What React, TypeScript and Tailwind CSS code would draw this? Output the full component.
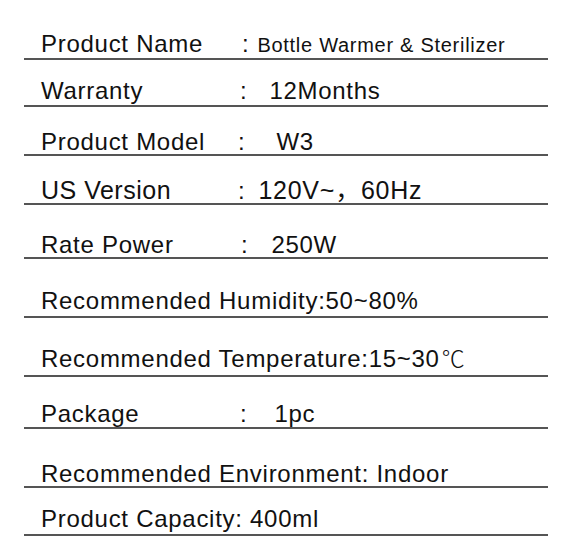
import React from 'react';

function Row({ h, pb, children }: { h: string; pb: string; children: React.ReactNode }) {
  return (
    <div className={`flex flex-col justify-end border-b-2 border-[#555] pl-[17px] ${h} ${pb}`}>
      <div className="flex items-baseline leading-none">{children}</div>
    </div>
  );
}

export default function App() {
  return (
    <div
      className="w-[574px] h-[556px] bg-white pt-[13px] pl-6 pr-[26px] text-[24px] tracking-[0.03em] text-[#111]"
      style={{ fontFamily: '"Liberation Sans", Arial, "Noto Sans CJK SC", sans-serif' }}
    >
      {/* Product Name */}
      <Row h="h-[47px]" pb="pb-[2px]">
        <span className="w-[196px] shrink-0">Product Name</span>
        <span className="ml-[5px]">:</span>
        <span className="ml-[8px] text-[20px]">Bottle Warmer &amp; Sterilizer</span>
      </Row>

      {/* Warranty */}
      <Row h="h-[47px]" pb="pb-[2px]">
        <span className="w-[196px] shrink-0">Warranty</span>
        <span className="ml-[3px]">:</span>
        <span className="ml-[22px]">12Months</span>
      </Row>

      {/* Product Model */}
      <Row h="h-[49px]" pb="pb-0">
        <span className="w-[196px] shrink-0">Product Model</span>
        <span className="ml-[1px]">:</span>
        <span className="ml-[31px]">W3</span>
      </Row>

      {/* US Version */}
      <Row h="h-[49px]" pb="pb-0">
        <span className="w-[196px] shrink-0 text-[25px] tracking-[0.02em]">US Version</span>
        <span className="ml-[1px]">:</span>
        <span className="ml-[13px] text-[25px] tracking-[0.03em]">
          120V~<span style={{ fontFamily: '"Noto Sans CJK SC", sans-serif' }}>，</span>60Hz
        </span>
      </Row>

      {/* Rate Power */}
      <Row h="h-[54px]" pb="pb-0">
        <span className="w-[196px] shrink-0">Rate Power</span>
        <span className="ml-[4px]">:</span>
        <span className="ml-[23px]">250W</span>
      </Row>

      <Row h="h-[59px]" pb="pb-[3px]">
        <span>Recommended Humidity:50~80%</span>
      </Row>

      <Row h="h-[59px]" pb="pb-[4.5px]">
        <span>Recommended Temperature:15~30</span>
        <span
          className="ml-[2px] font-light tracking-normal text-[23px]"
          style={{ fontFamily: '"Noto Sans CJK SC", sans-serif' }}
        >
          ℃
        </span>
      </Row>

      {/* Package */}
      <Row h="h-[52px]" pb="pb-[1.5px]">
        <span className="w-[196px] shrink-0">Package</span>
        <span className="ml-[3px]">:</span>
        <span className="ml-[27px]">1pc</span>
      </Row>

      <Row h="h-[59px]" pb="pb-0">
        <span>Recommended Environment: Indoor</span>
      </Row>

      <Row h="h-[48px]" pb="pb-[3.5px]">
        <span>Product Capacity: 400ml</span>
      </Row>
    </div>
  );
}
